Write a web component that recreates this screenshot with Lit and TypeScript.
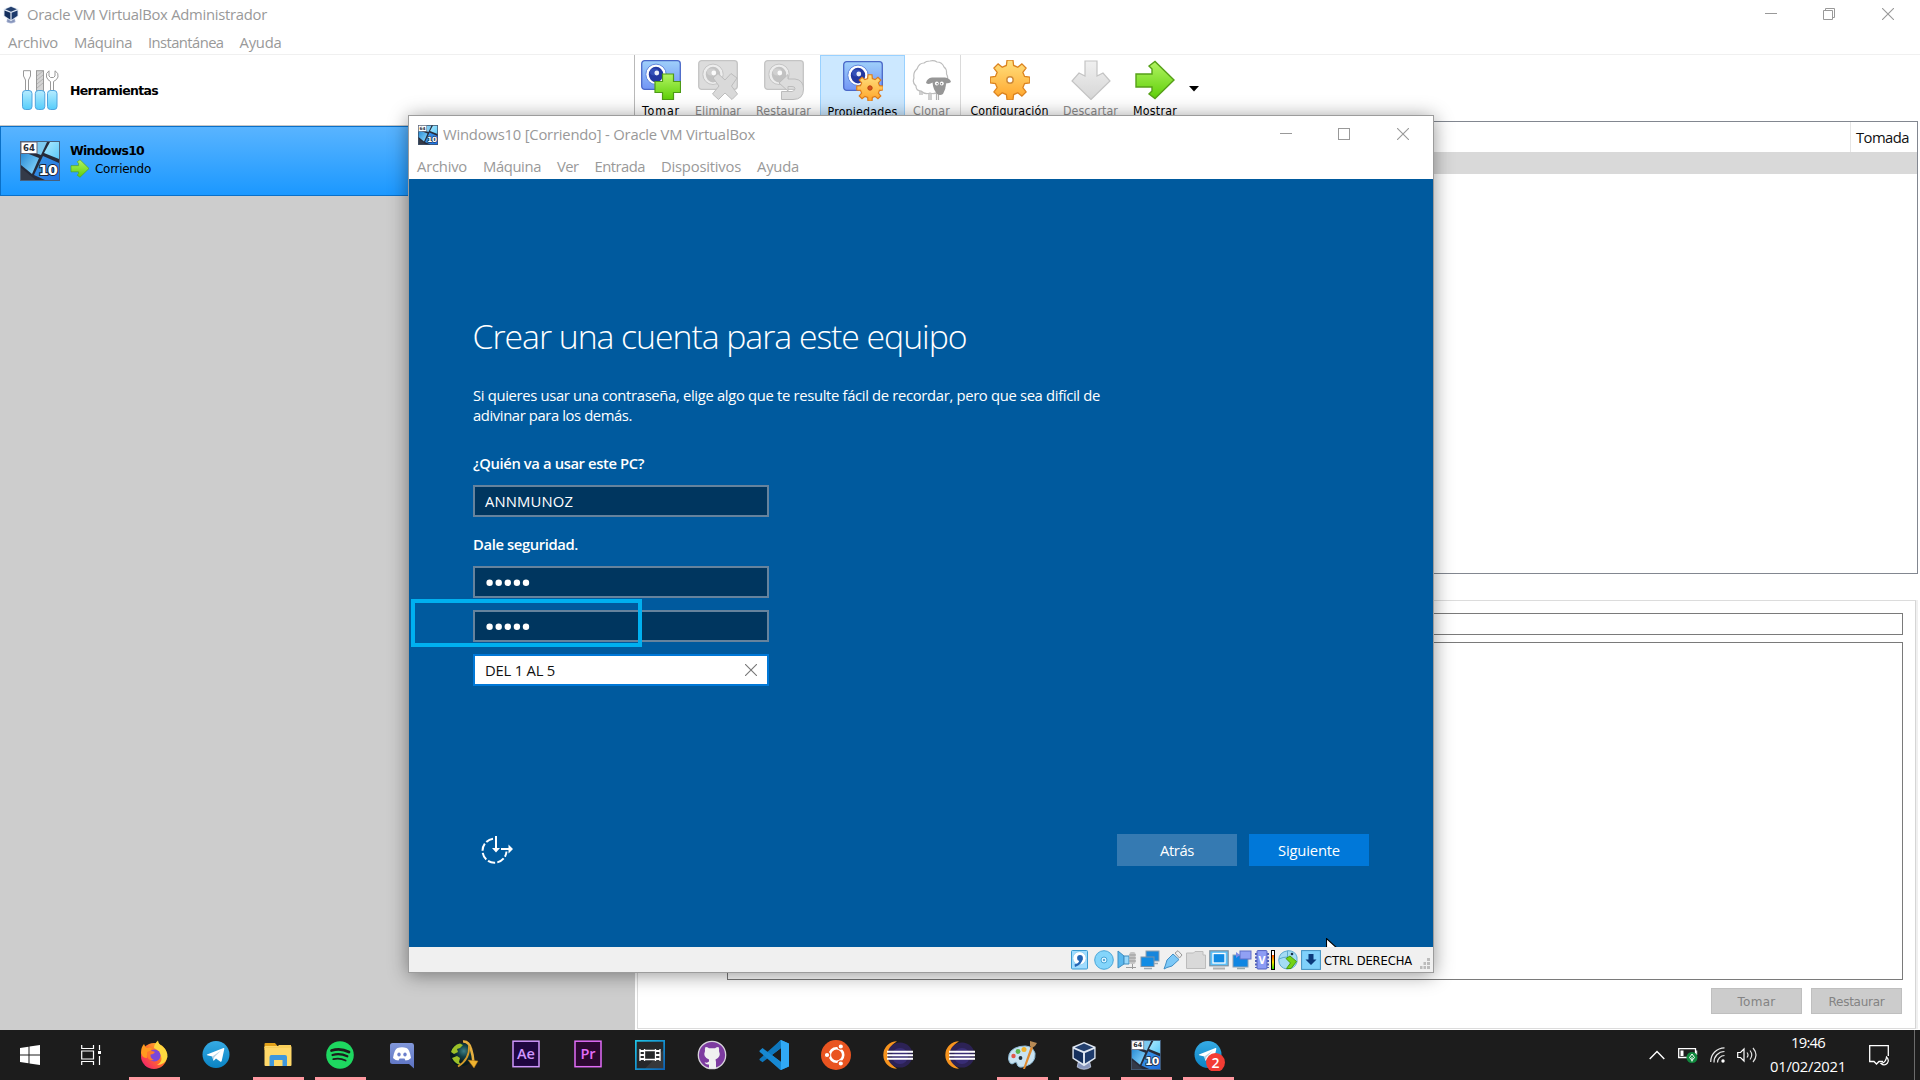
import { LitElement, html, svg, css } from "lit";
import { customElement, property } from "lit/decorators.js";

/** Single line of text whose tracking is tuned so that it spans `w` pixels. */
@customElement("fit-text")
class FitText extends LitElement {
  @property({ type: Number }) w = 0;
  @property() text = "";
  static styles = css`
    :host { display: inline-block; white-space: pre; }
    .t { display: inline-block; }
  `;
  async firstUpdated() {
    const fit = () => {
      const el = this.renderRoot.querySelector(".t") as HTMLElement;
      el.style.letterSpacing = "0px";
      const natural = el.getBoundingClientRect().width;
      el.style.letterSpacing = `${(this.w - natural) / this.text.length}px`;
    };
    fit();
    await document.fonts.ready;
    fit();
  }
  render() {
    return html`<span class="t">${this.text}</span>`;
  }
}

const t = (text: string, w: number, cls = "") =>
  html`<fit-text class=${cls} .w=${w} .text=${text}></fit-text>`;

function gear(cx: number, cy: number, R: number, r: number, n = 8) {
  const pts: string[] = [];
  const step = (Math.PI * 2) / n;
  for (let i = 0; i < n; i++) {
    const a = i * step - Math.PI / 2;
    for (const [d, q] of [[-0.31, r], [-0.19, R], [0.19, R], [0.31, r]]) {
      pts.push(`${(cx + q * Math.cos(a + d * step)).toFixed(2)},${(cy + q * Math.sin(a + d * step)).toFixed(2)}`);
    }
  }
  return pts.join(" ");
}

const camera = (off = false) => svg`
  <rect x=".7" y=".7" width="38.6" height="28.6" rx="3" fill=${off ? "#dcdcdc" : "url(#cam)"} stroke=${off ? "#c4c4c4" : "#4a68c8"} stroke-width="1.3"/>
  <circle cx="15" cy="14.3" r="10.2" fill=${off ? "#ededed" : "#fff"} stroke=${off ? "#c4c4c4" : "#5f86dd"}/>
  <ellipse cx="15" cy="14.6" rx="7.2" ry="7.8" fill=${off ? "#c2c2c2" : "#2338a0"}/>
  <ellipse cx="13.4" cy="12" rx="4.4" ry="3.4" fill=${off ? "#d0d0d0" : "#3450b8"}/>
  <circle cx="15.8" cy="13" r="2.4" fill="#fff" opacity=".9"/>`;

const win10 = (s: number) => html`<svg width=${s} height=${s} viewBox="0 0 40 40">
  <rect width="40" height="40" fill="#262b3a"/>
  <path d="M1 1H27L21 14L1 7Z" fill="#7cc9f0"/>
  <path d="M30 1H39V18L24 12Z" fill="url(#pane)"/>
  <path d="M1 10L19 17L12 33L1 24Z" fill="url(#pane2)"/>
  <path d="M23 15L39 22V39H25L14 34Z" fill="url(#pane3)"/>
  <path d="M0 26L17 40H0Z" fill="#343a48"/>
  <rect x=".5" y=".5" width="39" height="39" fill="none" stroke="#47607c"/>
  <rect x="1" y="1" width="16" height="11.5" fill="#fff" stroke="#667"/>
  <text class="ico" x="9" y="9.8" font-size="8.6" font-weight="700" text-anchor="middle" fill="#2b2f3a">64</text>
  <text class="ico" x="27.8" y="33.5" font-size="14.5" font-weight="700" text-anchor="middle" fill="#fff" stroke="#1c2436" stroke-width="2" paint-order="stroke" letter-spacing="-.8">10</text>
</svg>`;

const arrow = (w: number, h: number) => html`<svg width=${w} height=${h} viewBox="0 0 40 40">
  <path d="M1 14H17V9L14 6L20 1.5L39 20L20 38.5L14 34L17 31V27H1Z" fill="url(#green)" stroke="#56a018" stroke-width="1.4"/></svg>`;

const vbox = (w: number, h: number) => html`<svg width=${w} height=${h} viewBox="0 0 26 30">
  <path d="M7 22H19L20 27Q13 31.5 6 27Z" fill="#8795bb" stroke="#c9d2e8" stroke-width=".8"/>
  <path d="M13 1L25 6V18L13 26L1 18V6Z" fill="#dfe7f2"/>
  <path d="M13 2.6L22.5 6.6L13 10.6L3.5 6.6Z" fill="#24406e"/>
  <path d="M2.4 8.3L12 12.3V23.4L2.4 17.2Z" fill="#152f5c"/>
  <path d="M23.6 8.3L14 12.3V23.4L23.6 17.2Z" fill="#1d3a6b"/>
</svg>`;

const minimize = html`<svg width="12" height="12" viewBox="0 0 12 12"><path d="M0 5.5H12" stroke="#999"/></svg>`;
const restore = html`<svg width="12" height="12" viewBox="0 0 12 12"><path d="M.5 2.5H9.5V11.5H.5ZM2.500 2.500V.500H11.500V9.500H9.500" fill="none" stroke="#999"/></svg>`;
const maximize = html`<svg width="12" height="12" viewBox="0 0 12 12"><rect x=".5" y=".5" width="11" height="11" fill="none" stroke="#999"/></svg>`;
const closeIcon = (c = "#999") => html`<svg width="12" height="12" viewBox="0 0 12 12"><path d="M0 0L12 12M12 0L0 12" stroke=${c} stroke-width="1.1"/></svg>`;

const big = (body: unknown) => html`<svg width="40" height="40" viewBox="0 0 40 40">${body}</svg>`;

const TOOLS = [
  { name: "Tomar", cls: "c50", w: 38, icon: big(svg`${camera()}<path d="M21.5 14H32.5V21.5H39.5V32.5H32.5V39.5H21.5V32.5H14V21.5H21.5Z" fill="url(#green)" stroke="#4d9a16" stroke-width="1.2"/>`) },
  { name: "Eliminar", cls: "c64 off", w: 46, icon: big(svg`${camera(true)}<path d="M15 18L20 13.5L27 20L33 13.5L39 18L33.5 26L39.5 34L34 39.5L27 33L20.5 39.5L14.5 34L21 26Z" fill="#d9d9d9" stroke="#bcbcbc"/>`) },
  { name: "Restaurar", cls: "c67 off", w: 55, icon: big(svg`${camera(true)}<path d="M15 23L24 14.5V19H31Q39.5 20 39.5 29Q39.5 39.5 29 39.5H17.5V31.5H28Q31 31 31 28.5Q31 26.5 28 26.5H24V31Z" fill="#dcdcdc" stroke="#bcbcbc"/>`) },
  { name: "Propiedades", cls: "c85 on", w: 70, icon: big(svg`${camera()}<polygon points=${gear(27, 27, 13.4, 9.8)} fill="url(#orange)" stroke="#dd7a1b" stroke-width="1.2"/><circle cx="27" cy="27" r="2.2" fill="#d9541e" stroke="#b8430f"/>`) },
  { name: "Clonar", cls: "c53 off", w: 37, icon: big(svg`
    <path d="M8 29V35M10 30V35M17 32V40M19 32V40M24.500 32V40M26.500 32V40" stroke="#b0b0b0" stroke-width="1.2"/>
    <path d="M18 1Q22 0 25 2Q30 2 32 7Q35 9 34.500 14Q37 18 34 23Q32 30 27 31Q23 35 18 33Q13 35 9 31Q4 31 4 26Q0 23 2 18Q1 12 5 9Q7 3 12 3Q14 1 18 1Z" fill="#fff" stroke="#bdbdbd" stroke-width="1.2"/>
    <path d="M14 23Q15 18 20 17.500H33Q38 18 39 22Q36 24 34 23Q34 29 31 34Q28 36 25 34Q21 29 20.500 22.500Q17 25 14 23Z" fill="#969696"/>
    <circle cx="24.800" cy="23.500" r="1.900" fill="#fff"/><circle cx="29.800" cy="23.500" r="1.900" fill="#fff"/><circle cx="25.200" cy="23.700" r=".8" fill="#777"/><circle cx="29.500" cy="23.700" r=".8" fill="#777"/>`) },
  { name: "Configuración", cls: "c98 sep", w: 78, icon: big(svg`<polygon points=${gear(20, 20, 20, 15)} fill="url(#orange)" stroke="#dc8420" stroke-width="1.3"/><circle cx="20" cy="20" r="3.2" fill="#fff" stroke="#cf8c3c" stroke-width="1.5"/>`) },
  { name: "Descartar", cls: "c65 off", w: 55, icon: big(svg`<path d="M14 1H26V16L32 13L39 21L20 39.5L1 21L8 13L14 16Z" fill="url(#grey)" stroke="#c4c4c4" stroke-width="1.2"/>`) },
  { name: "Mostrar", cls: "c64", w: 44, icon: arrow(40, 40) },
];

const tb = (body: unknown) => html`<svg width="30" height="30" viewBox="0 0 30 30">${body}</svg>`;

const telegram = svg`<circle cx="15" cy="14.5" r="13.5" fill="url(#tg)"/>
  <path d="M6 14.4L22.5 8Q23.6 7.800 23.300 9.100L20.700 21Q20.300 22.300 19.100 21.500L15 18.500L13 20.500Q12.300 21 12.100 20L11.300 16.600L6.200 15.200Q5.500 14.800 6 14.400Z" fill="#fff"/>
  <path d="M11.300 16.600L20 10.500L13.300 17.300L12.600 20.300Z" fill="#b9d4e6"/>`;
const adobe = (s: string, bg: string, fg: string) => tb(svg`<rect x="2" y="1.200" width="26" height="25.500" fill=${bg} stroke=${fg} stroke-width="1.500"/>
  <text class="ado" x="15" y="19" font-size="14.500" text-anchor="middle" fill=${fg}>${s}</text>`);
const eclipse = tb(svg`<path d="M14 1.300A13.700 13.700 0 0 0 14 28.700Q6 24 6 15T14 1.300Z" fill="#f7941e"/>
  <circle cx="17" cy="15" r="12.600" fill="#2c2255"/><circle cx="17" cy="16" r="8" fill="#41358a" opacity=".6"/>
  <path d="M4 11.700H30M4 15.200H30M4 18.700H30" stroke="#fff" stroke-width="2"/>`);

const APPS = [
  { run: true, icon: tb(svg`<circle cx="15" cy="16" r="13" fill="url(#ffx)"/>
      <path d="M15 8Q15 4 19 .500Q19.500 4 23 6Q29 11 28.500 17Q26 25 18 25Q24 22 22 16Q20 10 15 8Z" fill="#ffd83f"/>
      <path d="M2 13Q2 7 5 4Q6 7 8 8Q11 7 13 8L11 12Q7 13 8 18Q3 18 2 13Z" fill="#ff9a1f"/>
      <circle cx="15.500" cy="15.500" r="6" fill="#7b48d8"/><path d="M8 12Q12 10 16 12Q14.500 14.500 11.500 14.500Q11 18 15 20Q9 21 8 16Z" fill="#ff7a2a"/>`) },
  { icon: tb(telegram) },
  { run: true, icon: tb(svg`<path d="M1.500 4Q1.500 3 2.500 3H12L14.500 6V10H1.500Z" fill="#e3a21a"/>
      <rect x="1.500" y="6" width="27" height="20" rx="1" fill="#ffd869"/><path d="M1.500 7H14L16 5H28V8H1.500Z" fill="#f9cf5a"/>
      <path d="M6.500 26V17Q6.500 15 8.500 15H22Q24 15 24 17V26H19.500V20H11V26Z" fill="#3f97dd"/>`) },
  { run: true, icon: tb(svg`<circle cx="15" cy="15" r="13.800" fill="#1ed760"/>
      <g fill="none" stroke="#1c1c1c" stroke-linecap="round"><path d="M6.500 10.500Q15.500 7.500 24 12" stroke-width="2.700"/><path d="M7.500 15Q15 12.800 22.300 16.300" stroke-width="2.200"/><path d="M8.300 19.200Q14.500 17.500 20.600 20.500" stroke-width="1.800"/></g>`) },
  { icon: tb(svg`<path d="M3 5.500Q3 3 5.500 3H25Q27 3 27 5.500V28.500L22 24H5.500Q3 24 3 21.500Z" fill="url(#dis)"/>
      <path d="M10.500 8Q15 6.600 19.500 8Q22.500 9 24 18Q21.500 20.500 18.500 20.500L17.500 18.500H12.500L11.500 20.500Q8.500 20.500 6 18Q7.500 9 10.500 8Z" fill="#fff"/>
      <ellipse cx="12" cy="14.500" rx="1.700" ry="1.900" fill="#6c80cc"/><ellipse cx="18" cy="14.500" rx="1.700" ry="1.900" fill="#6c80cc"/>`) },
  { icon: tb(svg`<circle cx="12.500" cy="14.500" r="11.500" fill="url(#globe)"/>
      <path d="M2 12Q4 5 11 3.500L14 5L11 8L8 9L9 12L5 14ZM3 18L8 16L11 18L10 22L12 25Q6 24 3 18Z" fill="#9cc028"/>
      <path d="M14 1.500Q20 1 22 9Q24 15 24.500 23" fill="none" stroke="#e6b040" stroke-width="2.600"/>
      <path d="M20 6Q21 19 9 26.500" fill="none" stroke="#d29a2a" stroke-width="1.800"/>
      <path d="M19 20L29 21L25 28Z" fill="#f0b32f" stroke="#a86f10" stroke-width=".5"/>`) },
  { icon: adobe("Ae", "#1f0640", "#cf96fd") },
  { icon: adobe("Pr", "#2b0830", "#e26cf8") },
  { icon: tb(svg`<rect x=".800" y=".800" width="28.400" height="28.400" fill="#26282a" stroke="url(#edge)" stroke-width="1.800"/><path d="M10 28.500L28.500 10V28.500Z" fill="#fff" opacity=".08"/>
      <path d="M10 10.500H20M10 19.500H20" stroke="#fff" stroke-width="1.500"/>
      <path d="M5 9V21M9.500 9V21M20.500 9V21M25 9V21" stroke="#fff" stroke-width="1.300"/><path d="M5 11H9.500M5 15H9.500M5 19H9.500M20.500 11H25M20.500 15H25M20.500 19H25" stroke="#fff" stroke-width="2"/>`) },
  { icon: tb(svg`<circle cx="15" cy="15" r="13.700" fill="#7d3ba0" stroke="#d8d4dc" stroke-width="1.300"/>
      <path d="M8.500 7Q10.500 7 12 8.300H18Q19.500 7 21.500 7Q22.500 9 22 11Q24.500 17 18.500 19.500L19 22V28.200Q15 29 12 28.200V24.500Q8.500 25 7.500 22Q10 23.500 12 21.500L12 19.500Q5.500 17 8 11Q7.500 9 8.500 7Z" fill="#f0f0f0"/>`) },
  { icon: tb(svg`<path d="M21.500 0L29.500 3.500V26.500L21.500 30L6 15.500L9 14Z" fill="#1f97e4"/><path d="M22 8V22L12.800 15Z" fill="#1c1c1c"/>
      <path d="M22 8L3.500 22.300L.500 20V19L21.500 .200Z" fill="#0e77bd"/><path d="M.500 10.700L3.500 8L22 22L21.500 30L.500 11.700Z" fill="#1788d2"/>
      <path d="M22 0L30 3.500V26.500L22 30Z" fill="#30a8f4"/>`) },
  { icon: tb(svg`<circle cx="15" cy="15" r="15" fill="#e95420"/><circle cx="15.500" cy="15" r="6.700" fill="none" stroke="#fff" stroke-width="2.600"/>
      <g fill="#fff" stroke="#e95420" stroke-width="1.200"><circle cx="6" cy="15" r="2.700"/><circle cx="19.800" cy="6.500" r="2.700"/><circle cx="19.800" cy="23.500" r="2.700"/></g>`) },
  { icon: eclipse },
  { icon: eclipse },
  { run: true, icon: tb(svg`<path d="M1.500 19Q1 9 13 6.500Q25 4 28 13Q29 23 19 26Q11 29 10 24Q10 21 7 23Q3 26 1.500 19Z" fill="#c9e3f2" stroke="#8db9d3"/>
      <circle cx="6.500" cy="16" r="2.200" fill="#e0574a"/><circle cx="11" cy="11.500" r="2.400" fill="#5cb54e"/><circle cx="17" cy="9.500" r="2.500" fill="#f2b32c"/><circle cx="13.500" cy="18" r="1.900" fill="#24303a"/>
      <path d="M24 6L26 8L18 29L16 29Z" fill="#e08a2e"/><path d="M23 1L30 3L28 6L25 8L23 6Z" fill="#b78a55"/>`) },
  { run: true, icon: vbox(26, 29) },
  { run: true, icon: win10(30) },
  { run: true, icon: html`<svg width="34" height="32" viewBox="-2 -1 34 32">${telegram}<circle cx="22.500" cy="22.500" r="9.500" fill="#f23c34"/><text class="ado" x="22.500" y="27.500" font-size="14" text-anchor="middle" fill="#fff">2</text></svg>` },
];

const st = (w: number, body: unknown) => html`<svg width=${w} height="20" viewBox=${`0 0 ${w} 20`}>${body}</svg>`;
const STATUS = [
  st(17, svg`<rect x=".500" y=".500" width="16" height="18.500" rx="1" fill="#9fdcff" stroke="#3a9bd0"/><circle cx="8.500" cy="8.300" r="6.600" fill="#fff" stroke="#7cc4ea" stroke-width=".6"/><circle cx="9" cy="8" r="2.900" fill="#2465b5"/><path d="M11.800 8.500Q11 14.500 4 17L3.500 14.500Q8 13.500 8.500 10Z" fill="#2465b5"/>`),
  st(20, svg`<circle cx="10" cy="10" r="9.300" fill="#84d5fb" stroke="#4aa6d8"/><circle cx="10" cy="10" r="3" fill="#d8f2ff" stroke="#4aa6d8"/><circle cx="10" cy="10" r="1" fill="#3a8fc4"/>`),
  st(20, svg`<path d="M1 1L7 6V14L1 18Z" fill="#5ab8ee" stroke="#3f8dc0"/><path d="M7 6H12V14H7Z" fill="#9ad9fb" stroke="#3f8dc0"/><rect x="12.500" y="2" width="6" height="12" rx="2" fill="#c4c4c4"/><path d="M12 5H19M12 8H19M12 11H19M9 17.500H19M15.500 14V19" stroke="#9b9b9b"/>`),
  st(20, svg`<rect x="6" y="1" width="13" height="10" fill="#1686dc" stroke="#8f9fae"/><rect x="1" y="7" width="13" height="9.500" fill="#128ce4" stroke="#7c92a7"/><path d="M4 18.500H12M14 13.500H18" stroke="#9ca8b2" stroke-width="1.500"/>`),
  st(20, svg`<path d="M12 3L15 .700L19 5L16.500 8Z" fill="#eee" stroke="#999"/><path d="M10 4L16 9.500L9 16L4 17.500L1 19L2.500 15L4 10Z" fill="#7cc8f7" stroke="#418fc5"/>`),
  st(20, svg`<path d="M.500 3V18.500H19.500V5H17V1.500H9L7.500 3Z" fill="#d9d9d9" stroke="#bcbcbc"/>`),
  st(20, svg`<rect x=".800" y=".800" width="18.400" height="15" fill="#5cc0f8" stroke="#7d909f" stroke-width="1.200"/><rect x="4" y="3.500" width="12" height="9.500" fill="#118ae3" stroke="#fff" stroke-width="1.300"/><path d="M4 18.500H16" stroke="#b0b0b0" stroke-width="2"/>`),
  st(20, svg`<rect x="1" y="5" width="15" height="12" fill="#0f86e2" stroke="#8fa2b3"/><rect x="8" y="1" width="11" height="8" fill="#91a0f4" stroke="#5f6fc8"/><path d="M8 5L4 2V8Z" fill="#7a8ae5"/><path d="M5 18.500H13" stroke="#9aa" stroke-width="1.500"/>`),
  st(14, svg`<path d="M1 3V18M13 3V18" stroke="#5261b9" stroke-width="2" stroke-dasharray="2 1.500"/><rect x="2" y=".600" width="10" height="18.400" rx="1" fill="#8c9cf4" stroke="#5362c0"/><text class="ico" x="7" y="13.500" font-size="10" font-weight="700" text-anchor="middle" fill="#fff">V</text>`),
  st(4, svg`<rect width="4" height="20" fill="#000"/><rect x="1" y="1" width="2" height="4" fill="#fff"/><rect x="1" y="5" width="2" height="14" fill="url(#meter)"/>`),
  st(20, svg`<path d="M10 .700Q17 .500 19 7V12Q17 19 9 19Q1 18 .700 10Q1 2 10 .700Z" fill="#a4dcf5" stroke="#5ba9cf"/><path d="M9.500 .900V7Q5 7 1 9" fill="none" stroke="#5ba9cf"/><path d="M8 8.500L12 6L18.500 11.500L13 18.500H8.500L12.500 13Z" fill="#74d414" stroke="#4a9a10"/><circle cx="14" cy="4" r="1.300" fill="#17324a"/>`),
  st(20, svg`<rect x=".600" y=".600" width="18.800" height="18.800" fill="#7fd1fb" stroke="#3f8fc0"/><path d="M7.500 4H12.500V9.500H15.500L10 15L4.500 9.500H7.500Z" fill="#0b3a7a"/>`),
];

@customElement("app-root")
class AppRoot extends LitElement {
  static styles = css`
    :host { display: block; width: 1920px; height: 1080px; overflow: hidden; position: relative; background: #fff; font-family: "Open Sans", "Noto Sans", sans-serif; }
    * { box-sizing: border-box; }
    svg { display: block; flex: none; }
    .defs { position: absolute; width: 0; height: 0; }
    .ico { font-family: "DejaVu Sans", sans-serif; }
    .ado { font-family: "Open Sans", sans-serif; font-weight: 600; }
    .desktop { display: flex; flex-direction: column; height: 1080px; }
    .titlebar { display: flex; align-items: center; height: 30px; padding: 0 26px 2px 3px; color: #999; font-size: 14.800px; line-height: 28px; }
    .titlebar .name { flex: 1; margin-left: 8px; }
    .controls { display: flex; gap: 46px; padding-right: .500px; }
    .controls :last-child { margin-left: 1px; }
    .menu { display: flex; gap: 16px; height: 25px; padding: 2px 0 0 8px; color: #999; font-size: 14.800px; line-height: 21px; border-bottom: 1px solid #f0f0f0; }
    .body { display: flex; height: 975px; }
    .side { width: 635px; background: #cdcdcd; display: flex; flex-direction: column; font-family: "DejaVu Sans", sans-serif; color: #000; }
    .tools { height: 71px; background: #fff; border-right: 1px solid #b9b9b9; border-bottom: 1px solid #c8c8c8; display: flex; align-items: center; padding-left: 22px; }
    .tools .lbl { margin: 1px 0 0 11px; }
    .lbl { font-weight: 700; font-size: 12.500px; line-height: 18px; }
    .vm { height: 70px; border: 1px solid #0a70c8; background: linear-gradient(#59b4ff, #1b98ff); display: flex; padding: 14px 0 0 19px; }
    .vminfo { display: flex; flex-direction: column; margin: 1px 0 0 10px; }
    .state { display: flex; align-items: center; gap: 5px; font-size: 12px; line-height: 16px; margin-top: -1px; }
    .state fit-text { margin-top: 1px; }
    .main { flex: 1; display: flex; flex-direction: column; }
    .toolbar { display: flex; height: 66px; padding-left: 1px; font-family: "DejaVu Sans Condensed", "DejaVu Sans", sans-serif; font-stretch: condensed; font-size: 12.300px; line-height: 16px; color: #000; }
    .tool { display: flex; flex-direction: column; align-items: center; padding-top: 5px; gap: 3px; }
    .off { color: #8b8b8b; }
    .on { margin-left: 3px; background: #cce8ff; border: 1px solid #99d1ff; }
    .sep { border-left: 1px solid #dadada; margin-left: 2px; }
    .c50 { width: 50px; } .c64 { width: 64px; } .c67 { width: 67px; } .c85 { width: 85px; } .c53 { width: 53px; } .c98 { width: 98px; } .c65 { width: 65px; }
    .drop { margin: 31px 0 0 2px; }
    .table { height: 453px; margin: 0 2px 0 2px; border: 1px solid #828790; }
    .thead { height: 30px; display: flex; justify-content: flex-end; }
    .th { width: 67px; border-left: 1px solid #e5e5e5; padding-left: 5px; font-size: 14.800px; line-height: 30px; color: #111; }
    .selected { height: 22px; background: #d9d9d9; }
    .details { margin: 26px 2px 0 2px; height: 429px; border: 1px solid #dcdcdc; border-right-color: #d5d5d5; box-shadow: 2px 0 0 #f0f0f0; display: flex; flex-direction: column; padding: 12px 12px 0 89px; margin-right: 4px; }
    .field { height: 22px; border: 1px solid #7a7a7a; }
    .area { height: 338px; margin-top: 7px; border: 1px solid #7a7a7a; }
    .actions { display: flex; justify-content: flex-end; gap: 9px; margin: 8px 1px 0 0; font-family: "DejaVu Sans", sans-serif; font-size: 12px; line-height: 26px; color: #838383; }
    .gbtn { width: 91px; height: 26px; background: #ccc; border: 1px solid #bfbfbf; text-align: center; }

    .window { position: absolute; left: 408px; top: 115px; width: 1026px; height: 858px; border: 1px solid #9c9c9c; background: #fff; box-shadow: 0 2px 18px rgba(0, 0, 0, .42); display: flex; flex-direction: column; }
    .window .titlebar { height: 37px; padding: 0 24px 0 9px; line-height: 37px; align-items: center; }
    .window .name { margin: 0 0 1px 5px; }
    .window .controls { margin-bottom: 1px; }
    .window .menu { height: 26px; padding-top: 3px; border: 0; }
    .guest { height: 768px; background: #005a9e; color: #fff; padding: 137px 64px 0 64px; position: relative; overflow: hidden; display: flex; flex-direction: column; font-size: 14.800px; line-height: 20px; }
    .h1 { font-weight: 300; font-size: 33.800px; line-height: 40px; height: 40px; margin-left: -.500px; }
    .para { margin-top: 29px; height: 40px; display: flex; flex-direction: column; }
    .q { font-weight: 600; height: 20px; margin-top: 28px; }
    .q2 { margin-top: 17px; }
    .input { width: 296px; height: 32px; flex: none; border: 2px solid #66839d; background: #00365f; margin-top: 12px; padding: 0 10px; display: flex; align-items: center; justify-content: space-between; font-size: 14.800px; line-height: 28px; }
    .focus { background: #fff; color: #111; border-color: #0078d7; }
    .focus fit-text, .focus svg { margin-bottom: 1px; }
    .nav { display: flex; gap: 12px; align-items: center; margin-top: 148px; padding-left: 8px; }
    .grow { flex: 1; }
    .btn { width: 120px; height: 32px; background: #357ab2; text-align: center; line-height: 33px; }
    .primary { background: #0078d9; }
    .mark { position: absolute; left: 2px; top: 420px; width: 231px; height: 48px; border: 4px solid #00b0f0; }
    .cursor { position: absolute; left: 917px; top: 759px; }
    .status { flex: 1; background: #f0f0f0; display: flex; align-items: center; gap: 3px; padding-right: 3px; justify-content: flex-end; font-family: "DejaVu Sans Condensed", "DejaVu Sans", sans-serif; font-stretch: condensed; font-size: 12.800px; line-height: 16px; color: #000; }
    .status > fit-text { padding-top: 2px; }
    .status .hd { margin-right: 3px; }
    .pair { display: flex; gap: 2px; }
    .grip { margin: 8px 0 0 5px; }

    .taskbar { height: 50px; background: #1c1c1c; display: flex; color: #fff; }
    .sys { width: 61px; display: flex; align-items: center; justify-content: center; padding-right: 1px; }
    .gap { width: 1px; }
    .app { width: 62px; height: 50px; display: flex; align-items: center; justify-content: center; background-repeat: no-repeat; }
    .run { background-image: linear-gradient(#ff99a1, #ff99a1); background-size: 51px 3px; background-position: 6px 47px; }
    .tray { flex: 1; display: flex; justify-content: flex-end; align-items: center; }
    .tray svg { margin-right: 12px; }
    .tray .up { margin-right: 13px; }
    .tray .vol { margin-right: 12px; }
    .clock { display: flex; flex-direction: column; align-items: center; width: 76px; font-size: 14.800px; line-height: 23.500px; height: 48px; }
    .tray .note { margin: 0 25px 0 23px; }
    .peek { width: 6px; height: 50px; border-left: 1px solid #6b6b6b; }
  `;

  render() {
    return html`
      <svg class="defs"><defs>
        <linearGradient id="cam" x2="0" y2="1"><stop stop-color="#9fd0fa"/><stop offset="1" stop-color="#7295f5"/></linearGradient>
        <linearGradient id="green" x2="0" y2="1"><stop stop-color="#b2f463"/><stop offset="1" stop-color="#5fcf08"/></linearGradient>
        <linearGradient id="orange" x2="0" y2="1"><stop stop-color="#ffe07e"/><stop offset="1" stop-color="#ffa42a"/></linearGradient>
        <linearGradient id="grey" x2="0" y2="1"><stop stop-color="#f0f0f0"/><stop offset="1" stop-color="#d6d6d6"/></linearGradient>
        <linearGradient id="pane" x2="1" y2="1"><stop stop-color="#aeeaff"/><stop offset="1" stop-color="#5cc8f8"/></linearGradient>
        <linearGradient id="pane2" x2="1" y2="1"><stop stop-color="#2487d2"/><stop offset="1" stop-color="#8fdcff"/></linearGradient>
        <linearGradient id="pane3" x2="1" y2="1"><stop stop-color="#3d9ae8"/><stop offset="1" stop-color="#1e6fe0"/></linearGradient>
        <linearGradient id="tg" x2="0" y2="1"><stop stop-color="#36abe4"/><stop offset="1" stop-color="#0a83c4"/></linearGradient>
        <linearGradient id="ffx" x1="1" y1="0" x2="0" y2="1"><stop stop-color="#ffcf33"/><stop offset=".5" stop-color="#ff6a2c"/><stop offset="1" stop-color="#ef0f7c"/></linearGradient>
        <linearGradient id="dis" x2="0" y2="1"><stop stop-color="#8298da"/><stop offset="1" stop-color="#5a70c0"/></linearGradient>
        <linearGradient id="edge" x2="1" y2="1"><stop stop-color="#20c4e8"/><stop offset="1" stop-color="#0a62b8"/></linearGradient>
        <linearGradient id="meter" x2="0" y2="1"><stop stop-color="#ff4a00"/><stop offset=".5" stop-color="#ffe100"/><stop offset="1" stop-color="#2fd000"/></linearGradient>
        <linearGradient id="handle" x2="0" y2="1"><stop stop-color="#b6ecff"/><stop offset="1" stop-color="#55cdfb"/></linearGradient>
        <radialGradient id="globe" cx=".6" cy=".35"><stop stop-color="#3d7f84"/><stop offset=".5" stop-color="#123f45"/><stop offset="1" stop-color="#06181c"/></radialGradient>
      </defs></svg>
      <div class="desktop">
        <div class="titlebar">${vbox(16, 19)}<span class="name">${t("Oracle VM VirtualBox Administrador", 240)}</span>
          <div class="controls">${minimize}${restore}${closeIcon()}</div></div>
        <div class="menu">${t("Archivo", 50)}${t("Máquina", 58)}${t("Instantánea", 75.5)}${t("Ayuda", 42)}</div>
        <div class="body">
          <div class="side">
            <div class="tools">
              <svg width="37" height="40" viewBox="0 0 37 40">
                <path d="M1.500 .700H8.500V6L6.500 10V21H3.500V10L1.500 6Z" fill="#fff" stroke="#999"/>
                <rect x="14.500" y=".700" width="7" height="20" fill="#d4d4d4" stroke="#999"/><path d="M15 6L21 1M15 10L21 5M15 14L21 9M15 18L21 13" stroke="#aaa" stroke-width=".8"/>
                <path d="M27 .800Q23.500 3 24.500 7Q25.500 10 28.500 11.500V21H31.500V11.500Q35 10 36 7Q37 3 33 .800V6L31.500 7.500H28.500L27 6Z" fill="#fff" stroke="#999"/>
                <g fill="url(#handle)" stroke="#4fa3dd"><rect x=".500" y="20.500" width="9.500" height="19" rx="3"/><rect x="13.300" y="20.500" width="9.500" height="19" rx="3"/><rect x="25.500" y="20.500" width="9.500" height="19" rx="3"/></g>
              </svg>
              ${t("Herramientas", 88, "lbl")}
            </div>
            <div class="vm">${win10(40)}
              <div class="vminfo">${t("Windows10", 74, "lbl")}<div class="state">${arrow(20, 19)}${t("Corriendo", 56)}</div></div>
            </div>
          </div>
          <div class="main">
            <div class="toolbar">
              ${TOOLS.map((x) => html`<div class="tool ${x.cls}">${x.icon}${t(x.name, x.w)}</div>`)}
              <svg class="drop" width="10" height="6" viewBox="0 0 10 6"><path d="M0 0H10L5 5.500Z"/></svg>
            </div>
            <div class="table"><div class="thead"><div class="th">${t("Tomada", 53)}</div></div><div class="selected"></div></div>
            <div class="details"><div class="field"></div><div class="area"></div>
              <div class="actions"><div class="gbtn">${t("Tomar", 38)}</div><div class="gbtn">${t("Restaurar", 56)}</div></div></div>
          </div>
        </div>
        <div class="taskbar">
          <div class="sys"><svg width="20" height="20" viewBox="0 0 20 20"><path d="M0 3L8.500 1.700V9.500H0ZM9.500 1.500L20 0V9.500H9.500ZM0 10.500H8.500V18.300L0 17ZM9.500 10.500H20V20L9.500 18.500Z" fill="#fff"/></svg></div>
          <div class="sys"><svg width="20" height="20" viewBox="0 0 20 20"><path d="M.700 0V3.500H12.500V0M.700 20V16.500H12.500V20M.700 6H12.500V14H.700ZM18.500 0V5M18.500 11V20" fill="none" stroke="#fff" stroke-width="1.200"/><rect x="17" y="6" width="3" height="3" fill="#fff"/></svg></div>
          <div class="gap"></div>
          ${APPS.map((a) => html`<div class="app ${a.run ? "run" : ""}">${a.icon}</div>`)}
          <div class="tray">
            <svg class="up" width="16" height="10" viewBox="0 0 16 10"><path d="M.700 9L8 1.500L15.300 9" fill="none" stroke="#fff" stroke-width="1.400"/></svg>
            <svg width="20" height="16" viewBox="0 0 20 16"><path d="M.700 1.700H17.500V10.500H.700Z" fill="none" stroke="#fff" stroke-width="1.300"/><rect x="2.500" y="3.500" width="3" height="5.500" fill="#fff"/><path d="M18.700 3.500V8" stroke="#fff"/><circle cx="14" cy="10.500" r="5.500" fill="#10893e"/><path d="M14 7L16.500 10.500L14 13.500L11.500 10.500ZM14 10V14.500" fill="none" stroke="#fff"/></svg>
            <svg width="15" height="16" viewBox="0 0 15 16"><g fill="none" stroke="#e8e8e8" stroke-width="1.200"><path d="M.700 15A14 14 0 0 1 14.500 .800M4 15.500A10.500 10.500 0 0 1 14.500 4.500M7.500 15.500A7 7 0 0 1 14.500 8.500"/></g><circle cx="13" cy="14" r="1.700" fill="#fff"/></svg>
            <svg class="vol" width="21" height="16" viewBox="0 0 21 16"><path d="M.700 5.500H3.500L7 2V14L3.500 10.500H.700Z" fill="none" stroke="#fff" stroke-width="1.200"/><path d="M10 5.500Q12 8 10 10.500M13 3.500Q16.500 8 13 12.500M16 1Q22 8 16 15" fill="none" stroke="#e0e0e0" stroke-width="1.200"/></svg>
            <div class="clock">${t("19:46", 34)}${t("01/02/2021", 76)}</div>
            <svg class="note" width="20" height="21" viewBox="0 0 20 21"><path d="M14 16.500H10L7.500 19L5 16.500H.700V.700H19.300V11" fill="none" stroke="#fff" stroke-width="1.300"/><path d="M17.500 12Q20.500 15 18.500 18Q15.500 21.500 12 18.500Q17 17.500 17.500 12Z" fill="none" stroke="#fff" stroke-width="1.200"/></svg>
            <div class="peek"></div>
          </div>
        </div>
      </div>

      <div class="window">
        <div class="titlebar">${win10(20)}<span class="name">${t("Windows10 [Corriendo] - Oracle VM VirtualBox", 312)}</span>
          <div class="controls">${minimize}${maximize}${closeIcon()}</div></div>
        <div class="menu">${t("Archivo", 50)}${t("Máquina", 58)}${t("Ver", 21.5)}${t("Entrada", 50.5)}${t("Dispositivos", 80)}${t("Ayuda", 42)}</div>
        <div class="guest">
          <div class="h1">${t("Crear una cuenta para este equipo", 494)}</div>
          <div class="para">${t("Si quieres usar una contraseña, elige algo que te resulte fácil de recordar, pero que sea difícil de", 627)}${t("adivinar para los demás.", 159)}</div>
          <div class="q">${t("¿Quién va a usar este PC?", 171)}</div>
          <div class="input">${t("ANNMUNOZ", 88)}</div>
          <div class="q q2">${t("Dale seguridad.", 105)}</div>
          ${[0, 1].map(() => html`<div class="input"><svg width="46" height="8" viewBox="0 0 46 8"><g fill="#fff">${[0, 1, 2, 3, 4].map((i) => svg`<circle cx=${4.6 + i * 9.1} cy="4.800" r="3.200"/>`)}</g></svg></div>`)}
          <div class="input focus">${t("DEL 1 AL 5", 70)}${closeIcon("#777")}</div>
          <div class="nav">
            <svg width="32" height="28" viewBox="0 0 32 28"><path d="M12 2.800A12 12 0 1 0 25.500 15.500" fill="none" stroke="#fff" stroke-width="2" stroke-dasharray="7.500 2.200"/><path d="M15 0V13M20 13H28" stroke="#fff" stroke-width="2"/><path d="M11 12H19L15 16.500ZM27.500 8.500L32 13L27.500 17.500Z" fill="#fff"/></svg>
            <div class="grow"></div>
            <div class="btn">${t("Atrás", 34)}</div>
            <div class="btn primary">${t("Siguiente", 62)}</div>
          </div>
          <div class="mark"></div>
          <svg class="cursor" width="14" height="20" viewBox="0 0 14 20"><path d="M.500 .500V18L12 11Z" fill="#fff" stroke="#000" stroke-width="1.100"/></svg>
        </div>
        <div class="status">
          <div class="hd">${STATUS[0]}</div>${STATUS.slice(1, 8)}
          <div class="pair">${STATUS[8]}${STATUS[9]}</div>${STATUS.slice(10)}
          ${t("CTRL DERECHA", 88)}
          <svg class="grip" width="10" height="11" viewBox="0 0 10 11"><path d="M7 0H10V3H7ZM7 4H10V7H7ZM7 8H10V11H7ZM3.500 4H6V7H3.500ZM3.500 8H6V11H3.500ZM0 8H2.500V11H0Z" fill="#bcbcbc"/></svg>
        </div>
      </div>`;
  }
}
